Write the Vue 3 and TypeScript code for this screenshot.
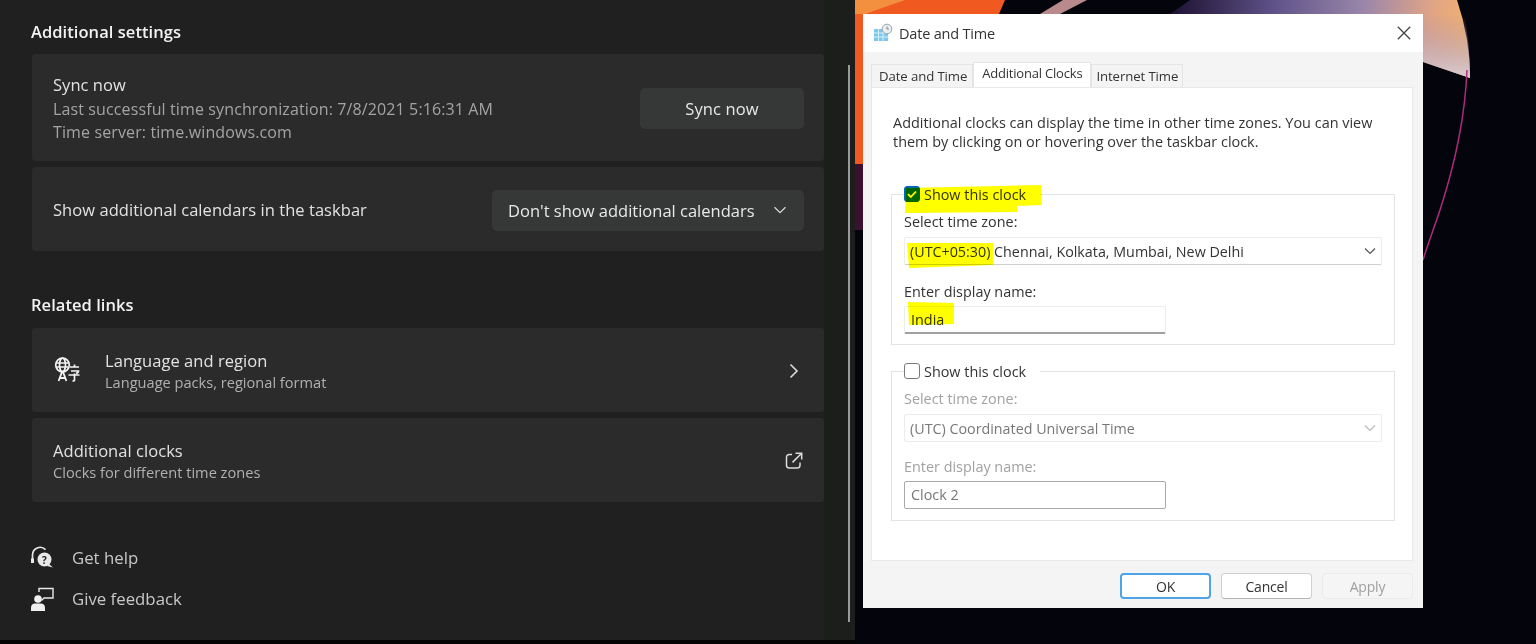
<script setup lang="ts">
import { ref } from 'vue';

const tabs = ['Date and Time', 'Additional Clocks', 'Internet Time'];
const activeTab = ref('Additional Clocks');
const showFirst = ref(true);
const showSecond = ref(false);
</script>

<template>
  <div class="screen">
    <section class="settings">
      <h2 class="section-title first">Additional settings</h2>
      <div class="card sync">
        <div class="card-text">
          <div class="card-title">Sync now</div>
          <div class="card-sub">Last successful time synchronization: 7/8/2021 5:16:31 AM</div>
          <div class="card-sub">Time server: time.windows.com</div>
        </div>
        <button class="fluent-btn sync-btn">Sync now</button>
      </div>
      <div class="card plain">
        <div class="card-title single">Show additional calendars in the taskbar</div>
        <button class="fluent-btn combo">
          <span>Don't show additional calendars</span>
          <svg width="16" height="16" viewBox="0 0 16 16" fill="none" stroke="#d6d6d6" stroke-width="1.3">
            <path d="M2.5 5.2 8 10.7l5.5-5.500" />
          </svg>
        </button>
      </div>

      <h2 class="section-title related">Related links</h2>
      <div class="card plain">
        <div class="link-left">
          <svg class="lang-icon" width="28" height="28" viewBox="0 0 28 28" fill="none" stroke="#f4f4f4" stroke-width="1.7">
            <circle cx="9.5" cy="9" r="6.800" />
            <ellipse cx="9.5" cy="9" rx="3" ry="6.800" />
            <path d="M3 7h13M3 11h12" />
            <path d="m5.600 25 3.600-9.600h.6l3.600 9.600M6.800 22h5.400" stroke-width="1.800" />
            <path d="M17 11h9M21.500 8.500v1.800M18 15h7.500c0 1-1 2-2.500 2.400M15.500 19h11M21.500 17.500v6.500c0 .8-.6 1-2 1" />
          </svg>
          <div class="card-text">
            <div class="card-title">Language and region</div>
            <div class="card-small">Language packs, regional format</div>
          </div>
        </div>
        <svg class="trail chevron" width="16" height="16" viewBox="0 0 16 16" fill="none" stroke="#dcdcdc" stroke-width="1.6">
          <path d="m4.500 1.500 6.500 6.500-6.500 6.500" />
        </svg>
      </div>
      <div class="card plain">
        <div class="card-text">
          <div class="card-title">Additional clocks</div>
          <div class="card-small">Clocks for different time zones</div>
        </div>
        <svg class="trail" width="18" height="18" viewBox="0 0 18 18" fill="none" stroke="#dcdcdc" stroke-width="1.5">
          <path d="M7 2.500H4.200A2.700 2.700 0 0 0 1.500 5.200v8.100A2.700 2.700 0 0 0 4.200 16h8.100a2.700 2.700 0 0 0 2.700-2.700v-2.800" />
          <path d="M10.500 1.200h6.200v6.200M16.400 1.500 7.500 10.400" />
        </svg>
      </div>

      <ul class="help-links">
        <li>
          <svg width="24" height="24" viewBox="0 0 24 24" fill="none">
            <path d="M2.500 14.500V9a7.600 7.600 0 0 1 13-5.400" stroke="#e8e8e8" stroke-width="1.700" />
            <path d="M1 12.500h3v4.500H1z" fill="#e8e8e8" />
            <circle cx="14.500" cy="13.500" r="7" fill="#e8e8e8" />
            <path d="m19 18 4 3.500-6-1.500z" fill="#e8e8e8" />
            <text x="14.500" y="17.500" text-anchor="middle" class="help-mark">?</text>
          </svg>
          <span>Get help</span>
        </li>
        <li>
          <svg width="24" height="24" viewBox="0 0 24 24" fill="none">
            <path d="M9 5V1.500h14V11h-9l-2.500 2.500" stroke="#e8e8e8" stroke-width="1.400" />
            <circle cx="8" cy="12" r="3.800" fill="#f0f0f0" />
            <path d="M1 24v-3.500C1 18 3 16.500 5 16.500h6c2 0 4 1.500 4 4V24z" fill="#f0f0f0" />
          </svg>
          <span>Give feedback</span>
        </li>
      </ul>
      <div class="scrollbar"></div>
    </section>

    <section class="desktop">
      <svg class="wallpaper" width="681" height="644" viewBox="0 0 681 644">
        <defs>
          <linearGradient id="glow" gradientUnits="userSpaceOnUse" x1="315" y1="0" x2="610" y2="30">
            <stop offset="0" stop-color="#1c1030" />
            <stop offset="0.35" stop-color="#5e5288" />
            <stop offset="0.65" stop-color="#9a86aa" />
            <stop offset="0.88" stop-color="#e0a486" />
            <stop offset="1" stop-color="#f0b070" />
          </linearGradient>
          <linearGradient id="lowerGlow" gradientUnits="userSpaceOnUse" x1="590" y1="14" x2="590" y2="78">
            <stop offset="0" stop-color="#a08cb4" stop-opacity="0" />
            <stop offset="1" stop-color="#d8ccd4" />
          </linearGradient>
        </defs>
        <rect width="681" height="644" fill="#04040c" />
        <path d="M0 0h150l-6 14H8v150H0z" fill="#f0591f" />
        <path d="M0 0h50L10 14H0z" fill="#f29040" />
        <path d="M0 164h8v66H0z" fill="#3a1230" />
        <path d="M185 14 208 0h24l-27 14z" fill="#b88a8c" />
        <path d="M315 14 335 0h267q13 38 13 78l-47-16V14z" fill="url(#glow)" />
        <path d="M568 14h41q6 30 6 64l-47-16z" fill="url(#lowerGlow)" />
        <path d="M612 70c-2 50-14 100-27 140-6 18-12 34-17 50" fill="none" stroke="#b02a7c" stroke-width="1.500" />
      </svg>

      <div class="dialog">
        <header class="dialog-head">
          <div class="dialog-name">
            <svg width="20" height="20" viewBox="0 0 20 20">
              <rect x="1" y="6" width="14" height="12" fill="#7cc8e8" />
              <path d="M1 10h14M1 14h14M5.500 6v12M10 6v12" stroke="#d4f0fa" stroke-width="1" />
              <circle cx="14" cy="6" r="4.800" fill="#eceff2" stroke="#9aa4ac" stroke-width="1" />
              <path d="M14 3.500V6h2" fill="none" stroke="#707a82" stroke-width="0.900" />
            </svg>
            <span>Date and Time</span>
          </div>
          <svg width="14" height="14" viewBox="0 0 14 14" stroke="#444" stroke-width="1.300">
            <path d="m.8.8 12.400 12.400M13.200.8.800 13.200" />
          </svg>
        </header>

        <div class="dialog-body">
          <nav class="tabs">
            <div v-for="tab in tabs" :key="tab" class="tab" :class="{ active: tab === activeTab }">{{ tab }}</div>
          </nav>
          <div class="tab-page">
            <p class="intro">Additional clocks can display the time in other time zones. You can view them by clicking on or hovering over the taskbar clock.</p>

            <fieldset class="clock-group">
              <legend class="clock-legend">
                <span class="check on" :class="{ ticked: showFirst }">
                  <svg width="12" height="12" viewBox="0 0 12 12" fill="none" stroke="#fff" stroke-width="1.800">
                    <path d="m2 6.200 2.800 2.800L10 3.500" />
                  </svg>
                </span>
                <span>Show this clock</span>
              </legend>
              <label class="field-label">Select time zone:</label>
              <div class="select-box">
                <span>(UTC+05:30) Chennai, Kolkata, Mumbai, New Delhi</span>
                <svg width="12" height="8" viewBox="0 0 12 8" fill="none" stroke="#555" stroke-width="1.200"><path d="m1 1.500 5 5 5-5" /></svg>
              </div>
              <label class="field-label second">Enter display name:</label>
              <div class="text-box active-input">India</div>
            </fieldset>

            <fieldset class="clock-group lower">
              <legend class="clock-legend">
                <span class="check" :class="{ ticked: showSecond }"></span>
                <span>Show this clock</span>
              </legend>
              <label class="field-label off">Select time zone:</label>
              <div class="select-box off">
                <span>(UTC) Coordinated Universal Time</span>
                <svg width="12" height="8" viewBox="0 0 12 8" fill="none" stroke="#bbb" stroke-width="1.200"><path d="m1 1.500 5 5 5-5" /></svg>
              </div>
              <label class="field-label second off">Enter display name:</label>
              <div class="text-box off-input">Clock 2</div>
            </fieldset>
          </div>

          <footer class="dialog-foot">
            <button class="win-btn default">OK</button>
            <button class="win-btn">Cancel</button>
            <button class="win-btn disabled">Apply</button>
          </footer>
        </div>

        <!-- yellow marker strokes sit over the dialog contents -->
        <svg class="marker" width="560" height="594" viewBox="0 0 560 594">
          <path d="M43 174 178 171l1 20-25 1v6l-112 1z" />
          <path d="M44 229h86v22l-84 3z" />
          <path d="M45 288l46 1v21l-45 1z" />
        </svg>
      </div>
    </section>
    <div class="bottom-strip"></div>
  </div>
</template>

<style scoped>
.screen {
  position: relative;
  display: flex;
  width: 1536px;
  height: 644px;
  overflow: hidden;
  background: #04040c;
  font-family: "Open Sans", "Noto Sans", "Liberation Sans", sans-serif;
  filter: blur(0.45px);
}

.settings {
  position: relative;
  width: 855px;
  height: 640px;
  flex-shrink: 0;
  box-sizing: border-box;
  padding: 22px 31px 0 32px;
  background: linear-gradient(90deg, #202020 0, #202020 96.4%, #1b1e1b 96.4%);
  color: #e4e4e4;
}

.section-title {
  margin: 0;
  font-size: 16.5px;
  line-height: 20px;
  font-weight: 600;
  letter-spacing: 0.05px;
  color: #f2f2f2;
  margin-left: -1px;
}

.section-title.first {
  margin-bottom: 12px;
}

.section-title.related {
  margin-top: 44px;
  margin-bottom: 13px;
}

.card {
  display: flex;
  align-items: center;
  justify-content: space-between;
  box-sizing: border-box;
  width: 792px;
  padding: 0 20px 0 21px;
  margin-bottom: 6px;
  background: #2b2b2b;
  border-radius: 4px;
}

.card.sync {
  height: 107px;
}

.card.plain {
  height: 84px;
}

.card-text {
  padding-top: 1px;
}

.sync .card-text {
  padding-top: 2px;
}

.card-title {
  font-size: 16.5px;
  line-height: 22px;
  letter-spacing: 0.05px;
  color: #e2e2e2;
}

.sync .card-title {
  margin-bottom: 2px;
}

.card-title.single {
  padding-top: 2px;
}

.card-sub {
  font-size: 16px;
  line-height: 23px;
  letter-spacing: 0.12px;
  color: #a4a4a4;
}

.card-small {
  font-size: 14.6px;
  line-height: 20px;
  color: #b0b0b0;
}

.fluent-btn {
  box-sizing: border-box;
  height: 41px;
  margin-top: 2px;
  border: none;
  border-radius: 5px;
  background: #353836;
  color: #e8e8e8;
  font: inherit;
  font-size: 16.5px;
}

.sync-btn {
  width: 164px;
  letter-spacing: 0.1px;
}

.combo {
  display: flex;
  align-items: center;
  justify-content: space-between;
  width: 312px;
  padding: 0 16px;
}

.link-left {
  display: flex;
  align-items: center;
  gap: 24px;
}

.lang-icon {
  flex-shrink: 0;
}

.trail {
  margin: 2px 1px 0 0;
}

.trail.chevron {
  margin: 1px 2px 0 0;
}

.help-links {
  list-style: none;
  margin: 35px 0 0 -2px;
  padding: 0;
}

.help-links li {
  display: flex;
  align-items: center;
  gap: 18px;
  height: 41px;
  font-size: 16.8px;
  color: #c8c8c8;
}

.help-mark {
  font-size: 10px;
  font-weight: 700;
  fill: #202020;
}

.scrollbar {
  position: absolute;
  left: 848px;
  top: 65px;
  width: 2px;
  height: 557px;
  background: #9a9a9a;
}

.desktop {
  position: relative;
  flex: 1;
}

.wallpaper {
  position: absolute;
  left: 0;
  top: 0;
}

.dialog {
  position: absolute;
  left: 8px;
  top: 14px;
  width: 560px;
  height: 594px;
  display: flex;
  flex-direction: column;
  background: #f4f4f4;
  color: #333;
  font-size: 14.4px;
}

.dialog-head {
  display: flex;
  align-items: center;
  justify-content: space-between;
  height: 38px;
  flex-shrink: 0;
  padding: 0 12px 0 10px;
  background: #fff;
}

.dialog-name {
  display: flex;
  align-items: center;
  gap: 6px;
  font-size: 14.5px;
  letter-spacing: -0.2px;
}

.dialog-body {
  display: flex;
  flex-direction: column;
  flex: 1;
  padding: 10px 10px 0 8px;
}

.tabs {
  display: flex;
  align-items: flex-end;
  height: 25px;
}

.tab {
  display: flex;
  align-items: center;
  justify-content: center;
  height: 23px;
  box-sizing: border-box;
  border: 1px solid #e4e4e4;
  border-bottom: none;
  padding: 0 5px 0 7px;
  font-size: 13.2px;
  letter-spacing: -0.1px;
}

.tab.active {
  height: 25px;
  background: #fff;
  font-size: 13px;
  letter-spacing: -0.2px;
  padding: 0 8px 4px;
}

.tab:last-child {
  padding: 0 4px;
}

.tab-page {
  box-sizing: border-box;
  height: 474px;
  padding: 25px 20px 0 21px;
  background: #fff;
  border: 1px solid #e8e8e8;
}

.intro {
  margin: 0 0 34px;
  font-size: 14.45px;
  line-height: 19px;
  width: 490px;
}

.clock-group {
  box-sizing: border-box;
  width: 504px;
  height: 160px;
  margin: 0 0 0 -2px;
  padding: 0 12px;
  border: 1px solid #e3e3e3;
}

.clock-group.lower {
  height: 159px;
  margin-top: 17px;
}

.clock-legend {
  display: flex;
  align-items: center;
  gap: 4px;
  padding: 0 14px 0 0;
  height: 18px;
}

.check {
  display: flex;
  align-items: center;
  justify-content: center;
  box-sizing: border-box;
  width: 16px;
  height: 16px;
  background: #fff;
  border: 1px solid #7a7a7a;
  border-radius: 3px;
}

.check.ticked {
  background: #0067c0;
  border-color: #0067c0;
}

.field-label {
  display: block;
  line-height: 18px;
  margin-top: 10px;
}

.field-label.second {
  margin-top: 18px;
}

.lower .field-label.second {
  margin-top: 16px;
}

.field-label.off {
  color: #a2a2a2;
}

.select-box {
  display: flex;
  align-items: center;
  justify-content: space-between;
  box-sizing: border-box;
  width: 478px;
  height: 28px;
  margin-top: 6px;
  padding: 0 5px;
  font-size: 14.3px;
  background: #fff;
  border: 1px solid #ececec;
  border-bottom-color: #cfcfcf;
  border-radius: 2px;
}

.select-box.off {
  color: #777;
  border-bottom-color: #ececec;
}

.text-box {
  box-sizing: border-box;
  width: 262px;
  height: 28px;
  margin-top: 5px;
  padding: 4px 6px;
  line-height: 18px;
  border-radius: 2px;
  background: #fff;
}

.active-input {
  border: 1px solid #ececec;
  border-bottom: 2px solid #a0a0a0;
}

.off-input {
  border: 1px solid #a8a8a8;
  color: #777;
}

.dialog-foot {
  display: flex;
  justify-content: flex-end;
  gap: 10px;
  padding: 12px 0 0;
}

.win-btn {
  box-sizing: border-box;
  width: 91px;
  height: 26px;
  padding: 0;
  font: inherit;
  font-size: 14px;
  letter-spacing: -0.2px;
  color: #333;
  background: #fff;
  border: 1px solid #d0d0d0;
  border-bottom-color: #b4b4b4;
  border-radius: 4px;
}

.win-btn.default {
  border: 2px solid #4ea4e6;
}

.win-btn.disabled {
  background: #f5f5f5;
  border-color: #ebebeb;
  color: #a0a0a0;
}

.marker {
  position: absolute;
  left: 0;
  top: 0;
  pointer-events: none;
  mix-blend-mode: multiply;
  fill: #ffff00;
}

.bottom-strip {
  position: absolute;
  left: 0;
  right: 681px;
  bottom: 0;
  height: 4px;
  background: #040404;
}
</style>

<style>
html,
body {
  margin: 0;
  background: #04040c;
}
</style>
